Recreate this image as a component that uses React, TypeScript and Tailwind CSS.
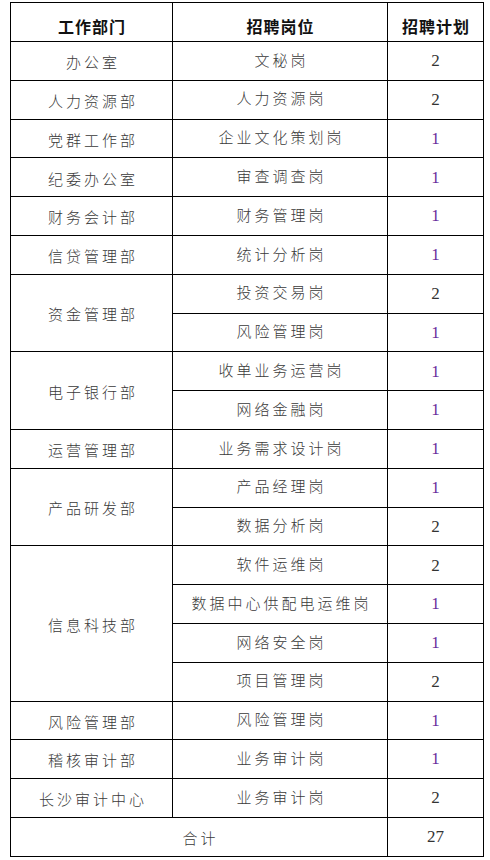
type Row = { dept?: string; span?: number; post: string; count: number };

const rows: Row[] = [
  { dept: '办公室', post: '文秘岗', count: 2 },
  { dept: '人力资源部', post: '人力资源岗', count: 2 },
  { dept: '党群工作部', post: '企业文化策划岗', count: 1 },
  { dept: '纪委办公室', post: '审查调查岗', count: 1 },
  { dept: '财务会计部', post: '财务管理岗', count: 1 },
  { dept: '信贷管理部', post: '统计分析岗', count: 1 },
  { dept: '资金管理部', span: 2, post: '投资交易岗', count: 2 },
  { post: '风险管理岗', count: 1 },
  { dept: '电子银行部', span: 2, post: '收单业务运营岗', count: 1 },
  { post: '网络金融岗', count: 1 },
  { dept: '运营管理部', post: '业务需求设计岗', count: 1 },
  { dept: '产品研发部', span: 2, post: '产品经理岗', count: 1 },
  { post: '数据分析岗', count: 2 },
  { dept: '信息科技部', span: 4, post: '软件运维岗', count: 2 },
  { post: '数据中心供配电运维岗', count: 1 },
  { post: '网络安全岗', count: 1 },
  { post: '项目管理岗', count: 2 },
  { dept: '风险管理部', post: '风险管理岗', count: 1 },
  { dept: '稽核审计部', post: '业务审计岗', count: 1 },
  { dept: '长沙审计中心', post: '业务审计岗', count: 2 },
];

const cjk = "font-['Noto_Sans_CJK_SC',sans-serif]";
const cell = 'border border-black text-center align-middle p-0';

export default function App() {
  return (
    <div className="w-[490px] h-[860px] bg-white overflow-hidden">
      <div className="pt-[2px] pl-[10px]">
        <table className="table-fixed border-collapse w-[473px]">
          <colgroup>
            <col className="w-[162px]" />
            <col className="w-[215px]" />
            <col className="w-[96px]" />
          </colgroup>
          <thead>
            <tr className="h-[39px]">
              {['工作部门', '招聘岗位', '招聘计划'].map((h) => (
                <th
                  key={h}
                  className={`${cell} ${cjk} pt-[7px] pl-[1px] text-[16px] font-bold tracking-[1px] text-[#111]`}
                >
                  {h}
                </th>
              ))}
            </tr>
          </thead>
          <tbody>
            {rows.map((r, i) => (
              <tr key={i} className="h-[38.8px]">
                {r.dept && (
                  <td
                    rowSpan={r.span ?? 1}
                    className={`${cell} ${cjk} pt-[3px] pl-[3px] text-[15px] font-light tracking-[3px] text-[#3a3a3a]`}
                  >
                    {r.dept}
                  </td>
                )}
                <td
                  className={`${cell} ${cjk} pb-[2px] pl-[3px] text-[15px] font-light tracking-[3px] text-[#3a3a3a]`}
                >
                  {r.post}
                </td>
                <td
                  className={`${cell} font-['Liberation_Serif',serif] text-[17px] ${
                    r.count === 1 ? 'text-[#6a2c9c]' : 'text-[#333]'
                  }`}
                >
                  {r.count}
                </td>
              </tr>
            ))}
            <tr className="h-[38.8px]">
              <td
                colSpan={2}
                className={`${cell} ${cjk} pt-[3px] pl-[3px] text-[15px] font-light tracking-[3px] text-[#3a3a3a]`}
              >
                合计
              </td>
              <td className={`${cell} font-['Liberation_Serif',serif] text-[17px] text-[#333]`}>
                27
              </td>
            </tr>
          </tbody>
        </table>
      </div>
      <div className="mt-[3px] h-[4px] bg-[#f1f1f1]" />
    </div>
  );
}
